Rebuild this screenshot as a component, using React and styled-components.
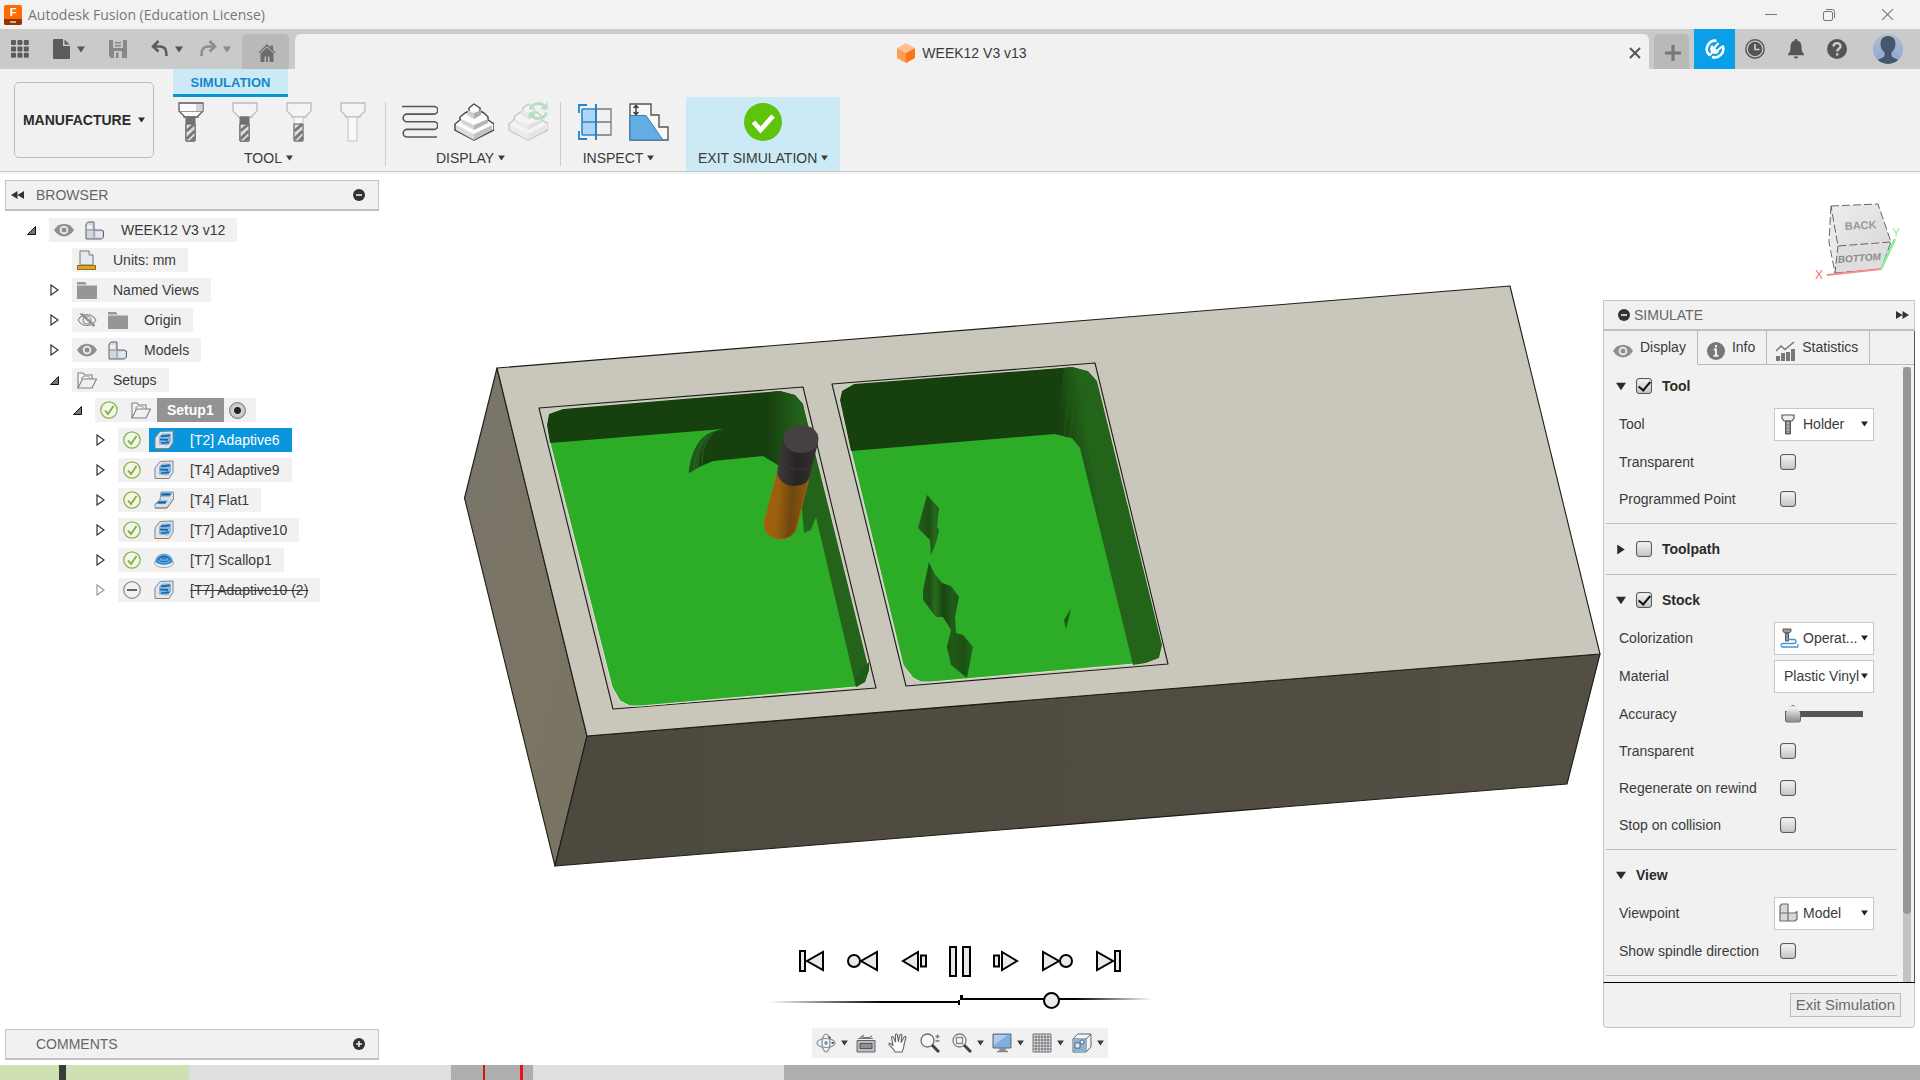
import React, { useState } from "react";
import styled, { createGlobalStyle } from "styled-components";

const Caret = ({ size = 8, color = "#3c3c3c" }) => (
    <svg width={size} height={size - 1} viewBox="0 0 8 7" aria-hidden="true">
        <path d="M0 0.5h8L4 6.5z" fill={color} />
    </svg>
);

/* ---------- icons ---------- */

const AppLogo = () => (
    <svg width="18" height="20" viewBox="0 0 18 20">
        <rect width="18" height="20" rx="2" fill="#ff6b00" />
        <path d="M0 14h18v4a2 2 0 0 1-2 2H2a2 2 0 0 1-2-2z" fill="#8c3600" />
        <text x="9" y="11" fontSize="11" fontWeight="700" fill="#fff" textAnchor="middle">
            F
        </text>
        <path d="M6 17h6" stroke="#e9c9b0" strokeWidth="1.6" />
    </svg>
);

const GridIcon = () => (
    <svg width="18" height="18" viewBox="0 0 18 18" fill="#5c5c5c">
        {[0, 6.4, 12.8].map((y) =>
            [0, 6.4, 12.8].map((x) => <rect key={x + "-" + y} x={x} y={y} width="5" height="5" rx="1" />)
        )}
    </svg>
);

const FileIcon = () => (
    <svg width="18" height="20" viewBox="0 0 18 20" fill="#5c5c5c">
        <path d="M1 0h9v7h7v12a1 1 0 0 1-1 1H1a1 1 0 0 1-1-1V1a1 1 0 0 1 1-1z" />
        <path d="M11.5 0.500l5 5h-5z" />
    </svg>
);

const SaveIcon = () => (
    <svg width="18" height="18" viewBox="0 0 18 18">
        <path d="M0 0h18v18H2l-2-2z" fill="#888" />
        <path d="M4 0h10v8H4zM5 11h8v7H5z" fill="#c9c9c9" />
        <path d="M6 2h6v1.500H6zM6 5h6v1.500H6zM7 12.500h2.500V18H7z" fill="#888" />
    </svg>
);

const UndoIcon = ({ color = "#5c5c5c", flip }) => (
    <svg width="18" height="18" viewBox="0 0 18 18" fill="none" stroke={color} strokeWidth="2.600">
        <g transform={flip ? "translate(18 0) scale(-1 1)" : undefined}>
            <path d="M7.500 1L2 6.500l5.500 5" />
            <path d="M2 6.500h7c4.500 0 6.800 3 6.500 9.500" />
        </g>
    </svg>
);

const HomeIcon = () => (
    <svg width="18" height="18" viewBox="0 0 18 18" fill="#6c6c6c">
        <path d="M9 0l3.500 3.400V1.500H15v4.400L18 9h-1.500L9 2.300 1.500 9H0z" />
        <path d="M9 3.500L15.500 9.300V18h-4v-5.500h-1.700V18H8v-5.500H6.500V18h-4V9.300z" />
    </svg>
);

const CubeLogo = () => (
    <svg width="18" height="20" viewBox="0 0 18 20">
        <path d="M9 0l9 5-9 5-9-5z" fill="#ffc194" />
        <path d="M0 5l9 5v10l-9-5z" fill="#ff9d55" />
        <path d="M18 5l-9 5v10l9-5z" fill="#ff7414" />
    </svg>
);

const CrossIcon = ({ size = 12, color = "#555", width = 2 }) => (
    <svg width={size} height={size} viewBox="0 0 12 12" stroke={color} strokeWidth={width}>
        <path d="M1 1l10 10M11 1L1 11" />
    </svg>
);

const PlusIcon = () => (
    <svg width="16" height="16" viewBox="0 0 16 16" stroke="#777" strokeWidth="3.200">
        <path d="M8 0v16M0 8h16" />
    </svg>
);

const ExtensionIcon = () => (
    <svg width="20" height="20" viewBox="0 0 20 20" fill="none" stroke="#fff">
        <path d="M4.500 16.300A8.500 8.500 0 0 1 11.500 1.700M17.500 6.500A8.500 8.500 0 0 1 7 18" strokeWidth="2.600" />
        <path d="M7 6.500l6.500 6.500c-2 2-4.500 2-6.300.5S5 8.500 7 6.500z" fill="#fff" strokeWidth="1" />
        <path d="M9.500 8.500L13.500 4M12.500 11.500L17 7.500M7 13.500l-2.500 3" strokeWidth="2" />
    </svg>
);

const ClockIcon = () => (
    <svg width="20" height="20" viewBox="0 0 20 20">
        <circle cx="10" cy="10" r="9.200" fill="none" stroke="#555" strokeWidth="1.400" />
        <circle cx="10" cy="10" r="7.200" fill="#555" />
        <path d="M10 5v5.500h4.500" stroke="#d2d2d2" strokeWidth="1.600" fill="none" />
    </svg>
);

const BellIcon = () => (
    <svg width="20" height="20" viewBox="0 0 20 20" fill="#555">
        <path d="M10 0c.9 0 1.400.6 1.400 1.400C14.500 2.200 15.500 5 15.500 8c0 4 .8 5.500 2.500 7v1.200H2V15c1.700-1.500 2.500-3 2.500-7 0-3 1-5.800 4.100-6.600C8.600.6 9.100 0 10 0zM7.800 17.500h4.400c-.3 1.400-1 2-2.200 2s-1.900-.6-2.200-2z" />
    </svg>
);

const HelpIcon = () => (
    <svg width="20" height="20" viewBox="0 0 20 20">
        <circle cx="10" cy="10" r="10" fill="#555" />
        <path d="M6.500 7.500c0-4.500 7-4.500 7-.3 0 2.400-3.300 2.500-3.300 5.300M10.200 14.200v2.400" fill="none" stroke="#d2d2d2" strokeWidth="2.300" />
    </svg>
);

const Avatar = () => (
    <svg width="30" height="30" viewBox="0 0 30 30">
        <defs>
            <linearGradient id="avatarSky" x1="0" y1="0" x2="0" y2="1">
                <stop offset="0" stopColor="#b3bfd2" />
                <stop offset="1" stopColor="#8ba4cf" />
            </linearGradient>
            <clipPath id="avatarRound">
                <circle cx="15" cy="15" r="15" />
            </clipPath>
        </defs>
        <g clipPath="url(#avatarRound)">
            <rect width="30" height="30" fill="url(#avatarSky)" />
            <path d="M15 2c4.500 0 7.500 3 7.500 7.500 0 4-1.500 7-4 8.700v3.300c0 2 4 2.500 6.500 4.500V30H5v-4c2.500-2 6.500-2.500 6.500-4.500v-3.300c-2.500-1.700-4-4.700-4-8.700C7.500 5 10.500 2 15 2z" fill="#46566d" />
        </g>
    </svg>
);

const MinimizeIcon = () => (
    <svg width="12" height="12" viewBox="0 0 12 12" stroke="#777">
        <path d="M0 5.500h12" />
    </svg>
);

const RestoreIcon = () => (
    <svg width="12" height="12" viewBox="0 0 12 12" stroke="#777" fill="none">
        <rect x="0.500" y="2.500" width="9" height="9" rx="1.500" />
        <path d="M3 .5h6.500a2 2 0 0 1 2 2V9" />
    </svg>
);

const MillIcon = ({ holder, shaft, flutes }) => (
    <svg width="26" height="40" viewBox="0 0 26 40">
        <path
            d="M1 1h24v8l-5 5v1H6v-1L1 9z"
            fill={holder ? "#fafafa" : "#f4f4f4"}
            stroke={holder ? "#5a5a5a" : "#bcbcbc"}
            strokeWidth="1.300"
        />
        {holder && <path d="M18 2h6.500v7H18z" fill="#d3d3d3" />}
        {holder && <path d="M2 9.500h22" stroke="#999" />}
        <path d="M8 15h9v24H8z" fill="#f8f8f8" stroke={shaft ? "#666" : "#c2c2c2"} />
        {shaft && <path d="M8 15h9v8H8z" fill="#727272" />}
        {flutes && (
            <g>
                <path d="M8 22h9v17H8z" fill="#dedede" stroke="#5a5a5a" />
                <path d="M8.500 29l8-7M8.500 37l8-8M13 39l4-4" stroke="#777" strokeWidth="2.800" />
            </g>
        )}
    </svg>
);

const ToolpathIcon = () => (
    <svg width="36" height="34" viewBox="0 0 36 34" fill="none" stroke="#555" strokeWidth="1.600">
        <path d="M0 1.500h32a3.800 3.800 0 0 1 0 7.600H5a3.800 3.800 0 0 0 0 7.700h27a3.800 3.800 0 0 1 0 7.600H5a3.800 3.800 0 0 0 0 7.600h30" />
    </svg>
);

const StockIcon = ({ faded, refresh }) => (
    <svg width="40" height="40" viewBox="0 0 40 40">
        <g opacity={faded ? 0.25 : 1} strokeLinejoin="round">
            <path d="M1 22l5-4v-3l5-4 4-2V6l5-4 6 4v3l4 2 4 4v3l6 4v6L20 38 1 28z" fill="#fdfdfd" stroke="#4a4a4a" strokeWidth="1.500" />
            <path d="M2 23l18 9v6L2 28z" fill="#dcdcdc" />
            <path d="M38 23l-18 9v6l18-10z" fill="#c2c2c2" />
            <path d="M7 17l13 6v5L7 21z" fill="#d5d5d5" />
            <path d="M34 17l-14 6v5l14-7z" fill="#b4b4b4" />
            <path d="M14 8l6 3v6l-7-4z" fill="#cfcfcf" />
            <path d="M27 8l-7 3v6l7-4z" fill="#adadad" />
        </g>
        {refresh && (
            <g fill="none" stroke="#b5dfc5" strokeWidth="3">
                <path d="M22 7.500c2-7 12-8 15-2M38.500 10.500c-2 7-12 8-15 2" />
                <path d="M39.500 0v7.500H32zM21 18v-7.500h7.500z" fill="#b5dfc5" stroke="none" />
            </g>
        )}
    </svg>
);

const CompareIcon = () => (
    <svg width="36" height="38" viewBox="0 0 36 38" fill="none">
        <path d="M5 6h14v26H5z" fill="#aed5f3" />
        <path d="M5 6h14M5 19h14M5 32h14M5 6v26" stroke="#2d86c9" strokeWidth="1.600" />
        <path d="M20 6h14v26H20M20 19h14" stroke="#777" strokeWidth="1.300" />
        <path d="M19 1v36" stroke="#1a76bd" strokeWidth="1.800" />
        <path d="M10 2H2v8M10 36H2v-8" stroke="#2186cf" strokeWidth="1.800" />
    </svg>
);

const StockCompareIcon = () => (
    <svg width="40" height="38" viewBox="0 0 40 38">
        <path d="M1 1h21v11h8v12h9v13H1z" fill="#f8f8f8" stroke="#555" strokeWidth="1.400" />
        <path d="M1 12.500h16L34 37H1z" fill="#63ade4" stroke="#3b7cae" />
        <path d="M7 3v8M4.500 5L7 2.500 9.500 5M4.500 9L7 11.500 9.500 9" fill="none" stroke="#333" strokeWidth="1.400" />
    </svg>
);

const DoneIcon = () => (
    <svg width="38" height="38" viewBox="0 0 38 38">
        <circle cx="19" cy="19" r="19" fill="#5ec30b" />
        <path d="M9.500 19l7 8L29 13" fill="none" stroke="#fff" strokeWidth="4.800" />
    </svg>
);

const DoubleArrow = ({ right }) => (
    <svg width="13" height="8" viewBox="0 0 13 8" fill="#333">
        <path d={right ? "M0 0l6.500 4L0 8zM6.500 0L13 4l-6.500 4z" : "M13 0L6.500 4 13 8zM6.500 0L0 4l6.500 4z"} />
    </svg>
);

const RoundSign = ({ plus }) => (
    <svg width="12" height="12" viewBox="0 0 12 12">
        <circle cx="6" cy="6" r="6" fill="#333" />
        <path d={plus ? "M6 3v6M3 6h6" : "M3 6h6"} stroke="#eee" strokeWidth="1.600" />
    </svg>
);

const EyeIcon = ({ off }) => (
    <svg width="20" height="14" viewBox="0 0 20 14">
        {off ? (
            <g fill="none" stroke="#8f8f8f" strokeWidth="1.200">
                <path d="M1 7c4.500-7.300 13.500-7.300 18 0-4.500 7.300-13.500 7.300-18 0z" />
                <circle cx="10" cy="7" r="4" />
                <path d="M3 0.500l14 13M5 0.500l13 12" />
            </g>
        ) : (
            <g>
                <path d="M0 7c5-8.500 15-8.500 20 0-5 8.500-15 8.500-20 0z" fill="#8f8f8f" />
                <circle cx="10" cy="7" r="4.300" fill="#eee" />
                <circle cx="10" cy="7" r="2.500" fill="#8f8f8f" />
            </g>
        )}
    </svg>
);

const ComponentIcon = () => (
    <svg width="19" height="19" viewBox="0 0 19 19" stroke="#5b6470" strokeLinejoin="round">
        <path d="M1 3l2-2h6v8h7l2.500 1v6l-2 2H1z" fill="#d2d7dd" />
        <path d="M1 9h8v9" fill="none" stroke="#8a929c" />
        <path d="M2 4h5v4H2z" fill="#f0f2f4" stroke="none" />
        <path d="M11 11h6v5h-6z" fill="#e4e8ec" stroke="none" />
    </svg>
);

const UnitsIcon = () => (
    <svg width="19" height="20" viewBox="0 0 19 20">
        <path d="M3 1h9l4 4v10H3z" fill="#e6eaf2" stroke="#777" />
        <path d="M12 1v4h4" fill="#fff" stroke="#777" />
        <rect x="0.500" y="15.500" width="18" height="4" fill="#dfa22b" stroke="#9a6c12" />
    </svg>
);

const FolderIcon = () => (
    <svg width="20" height="17" viewBox="0 0 20 17" fill="#969696">
        <path d="M0 0h8l2 2.500H0zM0 3.500h20V17H0z" />
    </svg>
);

const OpenFolderIcon = () => (
    <svg width="20" height="17" viewBox="0 0 20 17" fill="none" stroke="#7d8084" strokeWidth="1.100">
        <path d="M1 16V1h5l1.500 2H15v4" fill="#f6f6f6" />
        <path d="M1 16L5.500 7H19.500L15 16z" fill="#eef0f2" />
        <path d="M4 7c2-4 7-4 10 0" stroke="#a8acb0" />
    </svg>
);

const CheckRound = () => (
    <svg width="18" height="18" viewBox="0 0 18 18" fill="none">
        <circle cx="9" cy="9" r="8.200" fill="#f0f7e2" stroke="#8db255" strokeWidth="1.300" />
        <path d="M5 9.500l3 3.500 5.500-8" stroke="#84a94c" strokeWidth="1.800" />
    </svg>
);

const MinusRound = () => (
    <svg width="18" height="18" viewBox="0 0 18 18" fill="none">
        <circle cx="9" cy="9" r="8.300" stroke="#8a8a8a" strokeWidth="1.200" />
        <path d="M4 9h10" stroke="#666" strokeWidth="2" />
    </svg>
);

const AdaptiveIcon = () => (
    <svg width="20" height="20" viewBox="0 0 20 20">
        <path d="M1 18.500V8l5-6.500 13-.5v11.500l-4 6z" fill="#e3e5e8" stroke="#7d868f" />
        <path d="M5 14.500V7l3-3.500h9v8.500l-3 3.500z" fill="#83b7e3" />
        <path d="M7 6c3 1 6-1 9-.500M6 9.500l8 .3M7 12.800c3 .8 5-.8 8-.3" fill="none" stroke="#1763a0" strokeWidth="1.700" />
        <path d="M1 18.500h14" stroke="#a77b58" />
    </svg>
);

const FlatIcon = () => (
    <svg width="20" height="18" viewBox="0 0 20 18">
        <path d="M7 1h12.500v7L13 17H1v-4l5-4z" fill="#dcdfe3" stroke="#8a929b" />
        <path d="M7.500 1.500H18.500l-3 4H6zM5 9.500h9l-3 3.500H1.500z" fill="#5aa3dd" />
        <path d="M8 3.500h8.500M4 11.500h8" stroke="#0e5490" strokeWidth="1.300" />
        <path d="M1 17h12l6.500-9" fill="none" stroke="#a77b58" />
    </svg>
);

const ScallopIcon = () => (
    <svg width="20" height="15" viewBox="0 0 20 15">
        <path d="M0 9h20c0 7.500-20 7.500-20 0z" fill="#e9eef3" stroke="#8b98a5" strokeWidth="0.800" />
        <path d="M1 8.500C2-2 18-2 19 8.500c-1 4-17 4-18 0z" fill="#64a8de" />
        <g fill="none" stroke="#1763a0" strokeWidth="0.900">
            <ellipse cx="10" cy="7.500" rx="7" ry="3.600" />
            <ellipse cx="10" cy="6" rx="5" ry="2.600" />
            <ellipse cx="10" cy="4.500" rx="2.800" ry="1.500" />
        </g>
    </svg>
);

const InfoIcon = () => (
    <svg width="18" height="18" viewBox="0 0 18 18">
        <circle cx="9" cy="9" r="9" fill="#777" />
        <path d="M9 3v2.600M6.800 7.500H9v6M6.500 13.800h5" stroke="#f0f0f0" strokeWidth="2" fill="none" />
    </svg>
);

const StatsIcon = () => (
    <svg width="19" height="20" viewBox="0 0 19 20" fill="#777">
        <path d="M0 15h4v5H0zM5 12h4v8H5zM10 11h4v9h-4zM15 8h4v12h-4z" />
        <path d="M0 10l5-5 4 3.500L18 1" fill="none" stroke="#777" strokeWidth="1.400" />
    </svg>
);

const HolderIcon = () => (
    <svg width="18" height="21" viewBox="0 0 18 21">
        <path d="M3 1h12v3l-2 3H5L3 4z" fill="#eee" stroke="#555" strokeWidth="1.200" />
        <path d="M6.500 7h5v13h-5z" fill="#888" stroke="#555" />
        <path d="M9 8v11" stroke="#ddd" strokeDasharray="2 1.500" />
    </svg>
);

const OperationIcon = () => (
    <svg width="20" height="20" viewBox="0 0 20 20" fill="none">
        <path d="M4 1h8v2.500L10 5H6L4 3.500zM6.500 5h3v8h-3z" fill="#999" stroke="#555" />
        <path d="M9 11.500h6a2 2 0 0 1 0 4H3a2 2 0 0 0 0 3.500h16M19 16v3" stroke="#3d97d6" strokeWidth="1.300" />
    </svg>
);

const ModelIcon = () => (
    <svg width="19" height="19" viewBox="0 0 19 19" fill="#d8d8d8" stroke="#6a6a6a" strokeWidth="1.200" strokeLinejoin="round">
        <path d="M1 3l2-2h6v9H1zM1 10h8v8H1zM9 10h7l2-1.500V16l-2 2H9z" />
    </svg>
);

const TwistIcon = ({ open, dim }) =>
    open ? (
        <svg width="9" height="9" viewBox="0 0 9 9">
            <path d="M8.500 0.500v8h-8z" fill="#777" stroke="#111" />
        </svg>
    ) : (
        <svg width="9" height="12" viewBox="0 0 9 12">
            <path d="M1 1v10l7-5z" fill="#fff" stroke={dim ? "#999" : "#333"} strokeWidth="1.200" />
        </svg>
    );

/* playback glyphs share one stroke */
const Glyph = ({ width, height = 22, children }) => (
    <svg width={width} height={height} viewBox={`0 0 ${width} ${height}`} fill="#e9e9e9" stroke="#000" strokeWidth="2">
        {children}
    </svg>
);

const playback = [
    ["Go to start", <Glyph width={26}><path d="M1 1h5v20H1zM24 2v18L8 11z" /></Glyph>],
    ["Previous operation", <Glyph width={32}><circle cx="7" cy="11" r="6" /><path d="M30 2v18L14 11z" /></Glyph>],
    ["Step back", <Glyph width={26}><path d="M17 2v18L2 11zM20 5.500h5v11h-5z" /></Glyph>],
    ["Pause", <Glyph width={22} height={31}><path d="M1 1h6v29H1zM14 1h7v29h-7z" /></Glyph>],
    ["Step forward", <Glyph width={26}><path d="M9 2v18l15-9zM1 5.500h5v11H1z" /></Glyph>],
    ["Next operation", <Glyph width={32}><path d="M2 2v18l16-9z" /><circle cx="25" cy="11" r="6" /></Glyph>],
    ["Go to end", <Glyph width={26}><path d="M2 2v18l16-9zM20 1h5v20h-5z" /></Glyph>],
];

const navTools = [
    ["Orbit", true, (
        <svg width="20" height="20" viewBox="0 0 20 20" fill="none" stroke="#8a8f95" strokeWidth="1.200">
            <ellipse cx="10" cy="10" rx="9" ry="4.500" />
            <ellipse cx="10" cy="10" rx="4" ry="9" />
            <path d="M10 8v4M8 10h4" stroke="#3d7db5" />
            <path d="M12 3l3 1-1 2zM15 9l3 0-1 2.500z" fill="#444" stroke="none" />
        </svg>
    )],
    ["Look at", false, (
        <svg width="20" height="20" viewBox="0 0 20 20">
            <path d="M1 7.500h18V19H1z" fill="#b9bdc4" stroke="#666" />
            <path d="M4 10.500h12v5H4z" fill="#8c939d" stroke="#555" />
            <path d="M2 5.500h15M4 5l3-2.500v2h7l2-1.500" fill="none" stroke="#777" strokeWidth="1.100" />
        </svg>
    )],
    ["Pan", false, (
        <svg width="20" height="20" viewBox="0 0 20 20" fill="#fdfdfd" stroke="#666" strokeWidth="1.100" strokeLinejoin="round">
            <path d="M7 19c-1-3-4-5-6.300-8 .8-1.200 2.300-.5 4.300 1.500L3.500 4.500c.5-1.200 1.700-1 2 0L7.500 9V1.800c.5-1 1.700-1 2 0L10.300 8.500 12 1.800c.6-.9 1.700-.7 1.900.2L13 9.500l3.300-5.800c.9-.6 1.700 0 1.600.8L16 12c0 3-1 5-2 7z" />
        </svg>
    )],
    ["Zoom", false, (
        <svg width="20" height="20" viewBox="0 0 20 20" fill="none" stroke="#6a6f74" strokeWidth="1.300">
            <circle cx="7.500" cy="7.500" r="6.500" fill="#f6f8f8" />
            <path d="M12 12l7 7" stroke="#444" strokeWidth="3" />
            <path d="M15.500 3.500h4M17.500 1.500v4M15.500 8h4" stroke="#777" />
        </svg>
    )],
    ["Zoom window", true, (
        <svg width="20" height="20" viewBox="0 0 20 20" fill="none" stroke="#7a7f84" strokeWidth="1.300">
            <circle cx="7.500" cy="7.500" r="6.500" fill="#f6f8f8" />
            <path d="M4.500 4.500h6v6h-6z" stroke="#888" />
            <path d="M12 12l7 7" stroke="#444" strokeWidth="3" />
        </svg>
    )],
    ["Display settings", true, (
        <svg width="20" height="20" viewBox="0 0 20 20">
            <path d="M1 1h18v14H1z" fill="#7eaee0" stroke="#666" />
            <path d="M2 2h14L2 12z" fill="#a9ccf0" />
            <path d="M8 15h5v2.500H8zM5 18.500h11" fill="#999" stroke="#888" strokeWidth="1.500" />
        </svg>
    )],
    ["Grid and snaps", true, (
        <svg width="20" height="20" viewBox="0 0 20 20" fill="none" stroke="#62666c" strokeWidth="0.900">
            <path d="M1 1h18v18H1z" fill="#e8ebef" />
            <path d="M4 1v18M7 1v18M10 1v18M13 1v18M16 1v18M1 4h18M1 7h18M1 10h18M1 13h18M1 16h18" />
        </svg>
    )],
    ["Viewports", true, (
        <svg width="20" height="20" viewBox="0 0 20 20" fill="#f2f5f8" stroke="#5d6670">
            <path d="M5.500 1H19v13l-5 5H1V6z" />
            <path d="M1 6h13v13M14 6l5-5" fill="none" />
            <path d="M1.500 6.500h12v12h-12z" fill="#86b3de" stroke="none" />
            <path d="M3 10h5v5H3z" fill="#e4ecf4" />
            <circle cx="10" cy="9" r="2" />
        </svg>
    )],
];

/* ---------- 3d scene ---------- */

const Scene = () => (
    <SceneSvg viewBox="0 172 1920 893" role="img" aria-label="Stock simulation">
        <defs>
            <linearGradient id="front" x1="0" y1="0" x2="1" y2="0">
                <stop offset="0" stopColor="#4c493f" />
                <stop offset="0.500" stopColor="#504c42" />
                <stop offset="1" stopColor="#534f45" />
            </linearGradient>
            <linearGradient id="side" x1="0" y1="0" x2="1" y2="1">
                <stop offset="0" stopColor="#79756a" />
                <stop offset="1" stopColor="#7a7461" />
            </linearGradient>
            <linearGradient id="wallA" gradientUnits="userSpaceOnUse" x1="768" y1="0" x2="802" y2="0">
                <stop offset="0" stopColor="#17400f" />
                <stop offset="1" stopColor="#23641a" />
            </linearGradient>
            <linearGradient id="wallB" gradientUnits="userSpaceOnUse" x1="1058" y1="410" x2="1084" y2="406">
                <stop offset="0" stopColor="#17400f" />
                <stop offset="1" stopColor="#23641a" />
            </linearGradient>
            <linearGradient id="shade" gradientUnits="userSpaceOnUse" x1="918" y1="0" x2="975" y2="0">
                <stop offset="0" stopColor="#216018" />
                <stop offset="0.200" stopColor="#1c4f15" />
                <stop offset="0.300" stopColor="#2a6a20" />
                <stop offset="0.450" stopColor="#18450f" />
                <stop offset="0.600" stopColor="#205b18" />
                <stop offset="0.800" stopColor="#1b5013" />
                <stop offset="1" stopColor="#236a1b" />
            </linearGradient>
            <linearGradient id="shank" x1="0" y1="0" x2="1" y2="0">
                <stop offset="0" stopColor="#3f3b3a" />
                <stop offset="0.500" stopColor="#262324" />
                <stop offset="1" stopColor="#383435" />
            </linearGradient>
            <linearGradient id="brass" x1="0" y1="0" x2="1" y2="0.100">
                <stop offset="0" stopColor="#a85c0b" />
                <stop offset="0.350" stopColor="#9a600f" />
                <stop offset="0.650" stopColor="#6e470f" />
                <stop offset="1" stopColor="#92570c" />
            </linearGradient>
        </defs>

        <g stroke="#1d1c18" strokeWidth="1.100" strokeLinejoin="round">
            <path d="M497 368L464.500 498 555 866 587 736z" fill="url(#side)" />
            <path d="M587 736L1600 654 1567 784 555 866z" fill="url(#front)" />
            <path d="M497 368L1510 286 1600 654 587 736z" fill="#c9c7bc" />
            <path d="M539 408L803 387 876 688 613 709zM832 384L1095 363 1168 664 906 686z" fill="#cbc9be" />
        </g>

        {/* left pocket */}
        <path d="M549 414L563 409 780 391 795 395 803 404 869 670 865 682 856 687 641 706 630 706 620 701 612 687 550 443 547 425z" fill="#2cac27" stroke="#e4e2d8" strokeWidth="1" />
        <path d="M549 414L563 409 780 391 795 395 803 404 812 460 778 459 763 456 713 461 699 467 689 473C691 452 699 434 723 429L550 443 547 425z" fill="#17400f" />
        <path d="M780 391L795 395 803 404 869 670 865 682 856 687 816 517 811 530 804 533 802 510 786 470 763 456 770 392z" fill="url(#wallA)" />
        <path d="M716 431C704 440 699 452 699 467L689 473C691 452 699 434 716 431z" fill="#20571a" />
        <path d="M712 434C703 445 702 455 702 465M706 437C697 448 695 458 694 470" stroke="#2d6426" fill="none" />
        <path d="M856 687L854 678 869 662 869 670 865 682z" fill="#1f5a16" />

        {/* right pocket */}
        <path d="M842 391L854 384 1073 367 1088 371 1097 381 1162 645 1159 658 1146 663 931 682 921 682 913 678 903 665 851 451 840 400z" fill="#2cac27" stroke="#e4e2d8" strokeWidth="1" />
        <path d="M842 391L854 384 1073 367 1082 448 1072 438 1055 434 851 451 840 400z" fill="#17400f" />
        <path d="M1064 368L1073 367 1088 371 1097 381 1162 645 1159 658 1146 663 1133 665 1080 448 1072 438 1055 434z" fill="url(#wallB)" />
        <path d="M1072 370L1064 436M1078 371L1070 438M1085 373L1076 442" stroke="#265e1d" strokeWidth="0.800" fill="none" />
        <g fill="url(#shade)">
            <path d="M927 495L939 508 937 527 939 530 936 543 931 555 930 540 918 528z" />
            <path d="M929 562L934 573 942 583 951 586 959 597 955 617 956 633 963 635 973 647 967 678 951 665 947 647 951 630 943 617 936 617 923 600 923 590z" />
        </g>
        <path d="M1071 608L1069 617 1066 629 1064 620z" fill="#1c5a14" />

        {/* cutter */}
        <path d="M777 473L764 523C764 533 771 539 780 539 788 539 794 535 796 530L809 478z" fill="url(#brass)" stroke="#a86514" strokeWidth="0.800" />
        <path d="M783 439L777 473C779 481 786 486 793 486 801 486 808 483 809 478L818 443z" fill="url(#shank)" />
        <path d="M781 461c6 9 20 11 31 5" fill="none" stroke="#3c3839" />
        <ellipse cx="801" cy="439" rx="17.500" ry="14" fill="#454142" />
    </SceneSvg>
);

const ViewCube = () => (
    <CubeSvg width="90" height="90" viewBox="0 0 90 90" role="img" aria-label="View cube">
        <defs>
            <linearGradient id="cubeTop" x1="0" y1="0" x2="1" y2="1">
                <stop offset="0" stopColor="#eeeeee" />
                <stop offset="1" stopColor="#d9d9d9" />
            </linearGradient>
        </defs>
        <path d="M17 7L64 5 77 43 68 70 21 74 16 41z" fill="#e9e9e9" />
        <path d="M17 7L64 5 77 43 24 48z" fill="url(#cubeTop)" />
        <path d="M24 48L77 43 68 70 21 74z" fill="#dedede" />
        <path d="M17 7L64 5 77 43 24 47zM17 7L15 43 21 74 24 47M21 74L67 70 77 43" fill="none" stroke="#666" strokeWidth="1" strokeDasharray="8 3" />
        <path d="M13 76L67 70" stroke="#f58a8f" strokeWidth="2" />
        <path d="M67 70L81 40" stroke="#86ee8c" strokeWidth="2.500" />
        <text x="31" y="31" fontSize="11" fontWeight="700" fill="#999" transform="rotate(-3 31 31)">BACK</text>
        <text x="24" y="64" fontSize="10" fontStyle="italic" fontWeight="700" fill="#8c8c8c" transform="rotate(-4 24 64)">BOTTOM</text>
        <text x="1" y="80" fontSize="12" fill="#f07379">X</text>
        <text x="78" y="38" fontSize="12" fill="#92ef97">Y</text>
    </CubeSvg>
);

/* ---------- data ---------- */

const tree = [
    { level: 0, open: true, icons: [<EyeIcon />, <ComponentIcon />], label: "WEEK12 V3 v12" },
    { level: 1, leaf: true, icons: [<UnitsIcon />], label: "Units: mm" },
    { level: 1, icons: [<FolderIcon />], label: "Named Views" },
    { level: 1, icons: [<EyeIcon off />, <FolderIcon />], label: "Origin" },
    { level: 1, icons: [<EyeIcon />, <ComponentIcon />], label: "Models" },
    { level: 1, open: true, icons: [<OpenFolderIcon />], label: "Setups" },
    { level: 2, open: true, icons: [<CheckRound />, <OpenFolderIcon />], label: "Setup1", setup: true },
    { level: 3, icons: [<CheckRound />, <AdaptiveIcon />], label: "[T2] Adaptive6" },
    { level: 3, icons: [<CheckRound />, <AdaptiveIcon />], label: "[T4] Adaptive9" },
    { level: 3, icons: [<CheckRound />, <FlatIcon />], label: "[T4] Flat1" },
    { level: 3, icons: [<CheckRound />, <AdaptiveIcon />], label: "[T7] Adaptive10" },
    { level: 3, icons: [<CheckRound />, <ScallopIcon />], label: "[T7] Scallop1" },
    { level: 3, icons: [<MinusRound />, <AdaptiveIcon />], label: "[T7] Adaptive10 (2)", off: true },
];

const ribbon = [
    {
        name: "TOOL",
        icons: [
            ["Tool with holder", <MillIcon holder shaft flutes />],
            ["Shaft and flutes", <MillIcon shaft flutes />],
            ["Flutes", <MillIcon flutes />],
            ["Hidden tool", <MillIcon />],
        ],
    },
    {
        name: "DISPLAY",
        icons: [
            ["Toolpath", <ToolpathIcon />],
            ["Stock", <StockIcon />],
            ["Refresh stock", <StockIcon faded refresh />],
        ],
    },
    {
        name: "INSPECT",
        icons: [
            ["Section", <CompareIcon />],
            ["Compare", <StockCompareIcon />],
        ],
    },
];

const timeline = [
    { width: 189, color: "#cfe0b2" },
    { width: 262, color: "#dfdfdf" },
    { width: 82, color: "#aeaeae" },
    { width: 251, color: "#dfdfdf" },
    { width: 1136, color: "#aeaeae" },
];

const marks = [
    { at: 59, width: 7, color: "#3a3a3a" },
    { at: 483, width: 2, color: "#d01818" },
    { at: 520, width: 3, color: "#ee1111" },
];

/* ---------- panel parts ---------- */

const CheckRow = ({ id, label }) => (
    <Row>
        <RowLabel htmlFor={id}>{label}</RowLabel>
        <Control>
            <CheckBox id={id} type="checkbox" />
        </Control>
    </Row>
);

const SelectRow = ({ id, label, icon, value }) => (
    <Row $tall>
        <RowLabel htmlFor={id}>{label}</RowLabel>
        <SelectBox>
            {icon && <SelectIcon>{icon}</SelectIcon>}
            <Select id={id} $icon={!!icon}>
                <option>{value}</option>
            </Select>
            <SelectCaret>
                <Caret size={7} color="#222" />
            </SelectCaret>
        </SelectBox>
    </Row>
);

const SectionHead = ({ label, open = true, check, checked }) => (
    <Head>
        <FoldButton aria-label={"Fold " + label} $open={open}>
            <Caret size={10} color="#2b2b2b" />
        </FoldButton>
        {check && <CheckBox id={"show-" + label} type="checkbox" defaultChecked={checked} />}
        <HeadLabel as={check ? "label" : "span"} htmlFor={check ? "show-" + label : undefined}>
            {label}
        </HeadLabel>
    </Head>
);

function App() {
    const [selected, setSelected] = useState("[T2] Adaptive6");

    const renderTree = () => {
        return tree.map((item) => (
            <TreeItem key={item.label} $level={item.level}>
                <Twist>{!item.leaf && <TwistIcon open={item.open} dim={item.off} />}</Twist>
                <TreeBody>
                    {item.icons.length > 1 && <IconCell>{item.icons[0]}</IconCell>}
                    <Entry
                        $selected={selected === item.label}
                        $off={item.off}
                        $setup={item.setup}
                        onClick={() => setSelected(item.label)}
                    >
                        <IconCell>{item.icons[item.icons.length - 1]}</IconCell>
                        {item.setup ? <SetupName>{item.label}</SetupName> : <EntryName>{item.label}</EntryName>}
                    </Entry>
                    {item.setup && <SetupRadio type="radio" name="setup" aria-label="Active setup" defaultChecked />}
                </TreeBody>
            </TreeItem>
        ));
    };

    return (
        <>
            <GlobalStyle />
            <Page>
                <TitleBar>
                    <AppLogo />
                    <AppName>Autodesk Fusion (Education License)</AppName>
                    <WindowButtons>
                        <IconButton aria-label="Minimize"><MinimizeIcon /></IconButton>
                        <IconButton aria-label="Restore"><RestoreIcon /></IconButton>
                        <IconButton aria-label="Close"><CrossIcon size={13} color="#777" width={1} /></IconButton>
                    </WindowButtons>
                </TitleBar>

                <TabBar>
                    <QuickTools>
                        <IconButton aria-label="Data panel"><GridIcon /></IconButton>
                        <IconButton aria-label="File"><FileIcon /><Caret color="#555" /></IconButton>
                        <IconButton aria-label="Save"><SaveIcon /></IconButton>
                        <UndoGroup>
                            <IconButton aria-label="Undo"><UndoIcon /><Caret color="#555" /></IconButton>
                            <IconButton aria-label="Redo"><UndoIcon flip color="#8d8d8d" /><Caret color="#8a8a8a" /></IconButton>
                        </UndoGroup>
                    </QuickTools>
                    <SmallTab $width={47} aria-label="Home"><HomeIcon /></SmallTab>
                    <DocumentTab>
                        <DocumentName><CubeLogo />WEEK12 V3 v13</DocumentName>
                        <IconButton aria-label="Close tab"><CrossIcon /></IconButton>
                    </DocumentTab>
                    <SmallTab $width={35} aria-label="New tab"><PlusIcon /></SmallTab>
                    <ExtensionButton aria-label="Extensions"><ExtensionIcon /></ExtensionButton>
                    <AccountTools>
                        <IconButton aria-label="Job status"><ClockIcon /></IconButton>
                        <IconButton aria-label="Notifications"><BellIcon /></IconButton>
                        <IconButton aria-label="Help"><HelpIcon /></IconButton>
                        <IconButton aria-label="Account"><Avatar /></IconButton>
                    </AccountTools>
                </TabBar>

                <Ribbon>
                    <Workspace>MANUFACTURE<Caret size={7} color="#2b2b2b" /></Workspace>
                    <div>
                        <RibbonTab>SIMULATION</RibbonTab>
                        <Groups>
                            {ribbon.map((group) => (
                                <Group key={group.name}>
                                    <GroupIcons>
                                        {group.icons.map(([label, icon]) => (
                                            <ToolButton key={label} aria-label={label}>{icon}</ToolButton>
                                        ))}
                                    </GroupIcons>
                                    <GroupLabel>{group.name}<Caret size={7} /></GroupLabel>
                                </Group>
                            ))}
                            <ExitGroup>
                                <GroupIcons>
                                    <ToolButton aria-label="Finish"><DoneIcon /></ToolButton>
                                </GroupIcons>
                                <ExitLabel>EXIT SIMULATION<Caret size={7} /></ExitLabel>
                            </ExitGroup>
                        </Groups>
                    </div>
                </Ribbon>

                <Viewport>
                    <Scene />
                    <Overlay>
                        <LeftColumn>
                            <PanelBar>
                                <BarIcon><DoubleArrow /></BarIcon>
                                <BarTitle>BROWSER</BarTitle>
                                <IconButton aria-label="Collapse browser"><RoundSign /></IconButton>
                            </PanelBar>
                            <Tree>{renderTree()}</Tree>
                            <Spacer />
                            <PanelBar>
                                <BarIcon />
                                <BarTitle>COMMENTS</BarTitle>
                                <IconButton aria-label="Open comments"><RoundSign plus /></IconButton>
                            </PanelBar>
                        </LeftColumn>

                        <CenterColumn>
                            <Playback>
                                {playback.map(([label, icon]) => (
                                    <IconButton key={label} aria-label={label}>{icon}</IconButton>
                                ))}
                            </Playback>
                            <Speed>
                                <svg width="384" height="12" viewBox="0 0 384 12" aria-hidden="true">
                                    <defs>
                                        <linearGradient id="fadeIn"><stop offset="0" stopColor="#000" stopOpacity="0" /><stop offset="0.600" /></linearGradient>
                                        <linearGradient id="fadeOut"><stop offset="0.600" /><stop offset="1" stopColor="#000" stopOpacity="0" /></linearGradient>
                                    </defs>
                                    <path d="M0 7h190v-1h2v5h-2V9H0z" fill="url(#fadeIn)" />
                                    <path d="M192 1h3v3h189v2H192z" fill="url(#fadeOut)" />
                                </svg>
                                <SpeedInput type="range" aria-label="Playback speed" min="0" max="1000" defaultValue="748" />
                            </Speed>
                            <NavBar>
                                {navTools.map(([label, menu, icon]) => (
                                    <NavButton key={label} aria-label={label} $menu={menu}>
                                        {icon}
                                        {menu && <Caret size={7} />}
                                    </NavButton>
                                ))}
                            </NavBar>
                        </CenterColumn>

                        <RightColumn>
                            <ViewCube />
                            <Simulate>
                                <SimHead>
                                    <IconButton aria-label="Collapse panel"><RoundSign /></IconButton>
                                    <SimTitle>SIMULATE</SimTitle>
                                    <DoubleArrow right />
                                </SimHead>
                                <SimBody>
                                    <SimTabs>
                                        <SimTab $active><EyeIcon /><span>Display</span></SimTab>
                                        <SimTab><InfoIcon /><span>Info</span></SimTab>
                                        <SimTab><StatsIcon /><span>Statistics</span></SimTab>
                                        <TabRest />
                                    </SimTabs>
                                    <Scroller>
                                        <Sections>
                                            <Section>
                                                <SectionHead label="Tool" check checked />
                                                <SelectRow id="tool" label="Tool" icon={<HolderIcon />} value="Holder" />
                                                <CheckRow id="tool-transparent" label="Transparent" />
                                                <CheckRow id="point" label="Programmed Point" />
                                            </Section>
                                            <Section>
                                                <SectionHead label="Toolpath" open={false} check />
                                            </Section>
                                            <Section>
                                                <SectionHead label="Stock" check checked />
                                                <SelectRow id="colorization" label="Colorization" icon={<OperationIcon />} value="Operat..." />
                                                <SelectRow id="material" label="Material" value="Plastic Vinyl" />
                                                <Row>
                                                    <RowLabel htmlFor="accuracy">Accuracy</RowLabel>
                                                    <Accuracy id="accuracy" type="range" defaultValue="0" />
                                                </Row>
                                                <CheckRow id="stock-transparent" label="Transparent" />
                                                <CheckRow id="regenerate" label="Regenerate on rewind" />
                                                <CheckRow id="collision" label="Stop on collision" />
                                            </Section>
                                            <Section>
                                                <SectionHead label="View" />
                                                <SelectRow id="viewpoint" label="Viewpoint" icon={<ModelIcon />} value="Model" />
                                                <CheckRow id="spindle" label="Show spindle direction" />
                                            </Section>
                                        </Sections>
                                        <ScrollTrack><ScrollThumb /></ScrollTrack>
                                    </Scroller>
                                </SimBody>
                                <SimFoot>
                                    <ExitButton>Exit Simulation</ExitButton>
                                </SimFoot>
                            </Simulate>
                        </RightColumn>
                    </Overlay>
                </Viewport>

                <Timeline>
                    {timeline.map((part, i) => (
                        <TimePart key={i} $size={part.width} $color={part.color} />
                    ))}
                    {marks.map((mark) => (
                        <TimeMark key={mark.at} $at={mark.at} $size={mark.width} $color={mark.color} />
                    ))}
                </Timeline>
            </Page>
        </>
    );
}

export default App;

const GlobalStyle = createGlobalStyle`
    * {
        box-sizing: border-box;
    }
    body {
        margin: 0;
        background: #fff;
        color: #3a3a3a;
        font: 14px/20px "Liberation Sans", Arial, sans-serif;
    }
    button, input, select {
        font: inherit;
        color: inherit;
    }
    svg {
        display: block;
        flex: none;
    }
`;

const Page = styled.div`
    display: flex;
    flex-direction: column;
    min-height: 100vh;
`;

const IconButton = styled.button`
    display: flex;
    align-items: center;
    gap: 6px;
    padding: 0;
    border: 0;
    background: none;
`;

const TitleBar = styled.header`
    display: flex;
    align-items: center;
    height: 29px;
    padding: 0 26px 0 4px;
    background: #f2f2f2;
`;
const AppName = styled.span`
    flex: 1;
    margin-left: 6px;
    color: #777;
    font-family: "Open Sans", "Noto Sans", sans-serif;
`;
const WindowButtons = styled.div`
    display: flex;
    gap: 46px;
`;

const TabBar = styled.nav`
    display: flex;
    align-items: flex-end;
    height: 40px;
    background: #cacaca;
`;
const QuickTools = styled.div`
    display: flex;
    align-items: center;
    gap: 24px;
    align-self: stretch;
    padding: 0 11px;
`;
const UndoGroup = styled.div`
    display: flex;
    gap: 16px;
`;
const SmallTab = styled.button`
    display: flex;
    align-items: center;
    justify-content: center;
    width: ${(p) => p.$width}px;
    height: 35px;
    padding: 3px 0 0 3px;
    border: 0;
    border-radius: 5px 5px 0 0;
    background: #b9b9b9;
`;
const DocumentTab = styled.div`
    display: flex;
    flex: 1;
    align-items: center;
    height: 35px;
    margin: 0 5px 0 6px;
    padding: 2px 8px 0 0;
    border-radius: 6px 6px 0 0;
    background: #f1f1f1;
`;
const DocumentName = styled.div`
    display: flex;
    flex: 1;
    align-items: center;
    justify-content: center;
    gap: 7px;
`;
const ExtensionButton = styled.button`
    display: grid;
    place-items: center;
    width: 41px;
    height: 40px;
    margin-left: 5px;
    padding: 0;
    border: 0;
    background: #0a9fe9;
`;
const AccountTools = styled.div`
    display: flex;
    align-items: center;
    align-self: stretch;
    gap: 21px;
    padding: 0 17px 0 10px;

    & > :last-child {
        margin-left: 5px;
    }
`;

const Ribbon = styled.section`
    display: flex;
    height: 103px;
    padding-left: 14px;
    border-bottom: 1px solid #c6c6c6;
    background: #f1f1f1;
`;
const Workspace = styled.button`
    display: flex;
    align-items: center;
    justify-content: center;
    gap: 7px;
    width: 140px;
    height: 76px;
    margin: 13px 19px 0 0;
    padding: 0;
    border: 1px solid #bcbcbc;
    border-radius: 5px;
    background: none;
    color: #2b2b2b;
    font-weight: 700;
`;
const RibbonTab = styled.div`
    width: 115px;
    height: 28px;
    border-bottom: 3px solid #0696d7;
    background: #cceaf6;
    color: #1787c8;
    font-size: 13px;
    font-weight: 700;
    line-height: 28px;
    text-align: center;
`;
const Groups = styled.div`
    display: flex;
`;
const Group = styled.div`
    display: flex;
    flex-direction: column;
    gap: 6px;
    position: relative;
    height: 74px;
    padding: 5px 15px 0 16px;

    &:first-child {
        padding-left: 0;
    }
    &:nth-child(-n + 2)::after {
        content: "";
        position: absolute;
        top: 5px;
        right: 0;
        width: 1px;
        height: 64px;
        background: #ccc;
    }
`;
const ExitGroup = styled(Group)`
    margin-left: 4px;
    padding: 5px 12px 0;
    background: #cceaf5;
`;
const GroupIcons = styled.div`
    display: flex;
    justify-content: center;
    gap: 18px;
    height: 40px;
`;
const ToolButton = styled.button`
    display: flex;
    align-items: center;
    justify-content: center;
    width: 36px;
    padding: 0;
    border: 0;
    background: none;
`;
const GroupLabel = styled.div`
    display: flex;
    align-items: center;
    justify-content: center;
    gap: 4px;
    padding-right: 7px;
`;
const ExitLabel = styled(GroupLabel)`
    padding-right: 0;
`;

const Viewport = styled.main`
    position: relative;
    display: flex;
    flex: 1;
    border-top: 2px solid #f3f3f3;
`;
const SceneSvg = styled.svg`
    position: absolute;
    inset: -2px 0 0;
    width: 100%;
    height: calc(100% + 2px);
`;
const Overlay = styled.div`
    position: relative;
    display: grid;
    grid-template-columns: 1fr auto 1fr;
    flex: 1;
    padding: 6px 5px 5px;
`;
const LeftColumn = styled.aside`
    display: flex;
    flex-direction: column;
    width: 374px;
`;
const CenterColumn = styled.div`
    display: flex;
    flex-direction: column;
    align-items: center;
    justify-content: flex-end;
    padding-bottom: 2px;
`;
const RightColumn = styled.aside`
    justify-self: end;
    width: 312px;
`;
const Spacer = styled.div`
    flex: 1;
`;

const PanelBar = styled.div`
    display: flex;
    align-items: center;
    height: 31px;
    padding: 0 13px 0 5px;
    border: 1px solid #c2c2c2;
    border-bottom-width: 2px;
    background: #f1f1f1;
    color: #666;
`;
const BarIcon = styled.span`
    width: 25px;
`;
const BarTitle = styled.span`
    flex: 1;
`;

const Tree = styled.ul`
    margin: 4px 0 0;
    padding: 0;
    list-style: none;
`;
const TreeItem = styled.li`
    display: flex;
    align-items: center;
    height: 30px;
    padding-left: ${(p) => 22 + p.$level * 23}px;
`;
const Twist = styled.span`
    width: 22px;
`;
const TreeBody = styled.div`
    display: flex;
    align-items: center;
    height: 24px;
    background: #f1f1f1;
`;
const IconCell = styled.span`
    display: flex;
    width: 31px;
    padding-left: 5px;
`;
const Entry = styled.button`
    display: flex;
    align-items: center;
    height: 24px;
    padding: 0 ${(p) => (p.$setup ? 3 : 12)}px 0 0;
    border: 0;
    background: ${(p) => (p.$selected ? "#0a96dc" : "transparent")};
    color: ${(p) => (p.$selected ? "#fff" : "#3a3a3a")};
    text-decoration: ${(p) => (p.$off ? "line-through" : "none")};
`;
const EntryName = styled.span`
    margin-left: 10px;
`;
const SetupName = styled.span`
    padding: 2px 10px;
    background: #939393;
    color: #fff;
    font-weight: 700;
`;
const SetupRadio = styled.input`
    appearance: none;
    width: 17px;
    height: 17px;
    margin: 0 10px 0 2px;
    border: 1px solid #777;
    border-radius: 50%;
    background: radial-gradient(circle, #222 0 3px, #d5d5d5 4px, #bbb 8px);
`;

const Playback = styled.div`
    display: flex;
    align-items: center;
    gap: 22px;
    height: 32px;
`;
const Speed = styled.div`
    position: relative;
    margin: 17px 0 22px;
`;
const SpeedInput = styled.input`
    position: absolute;
    inset: -3px 0 0;
    width: 100%;
    height: 18px;
    margin: 0;
    appearance: none;
    background: none;

    &::-webkit-slider-thumb {
        appearance: none;
        width: 17px;
        height: 17px;
        border: 2px solid #000;
        border-radius: 50%;
        background: #ececec;
    }
`;
const NavBar = styled.div`
    display: flex;
    align-items: center;
    gap: 8px;
    height: 30px;
    padding: 0 4px;
    background: #f1f1f1;
`;
const NavButton = styled(IconButton)`
    gap: 5px;
    margin-right: ${(p) => (p.$menu ? 0 : 4)}px;
`;

const CubeSvg = styled.svg`
    margin: 19px 0 11px 211px;
`;

const Simulate = styled.section`
    border: 1px solid #c4c4c4;
    border-radius: 0 0 4px 4px;
    background: #f1f1f1;
`;
const SimHead = styled.div`
    display: flex;
    align-items: center;
    gap: 4px;
    height: 30px;
    padding: 0 5px 0 14px;
    border-bottom: 2px solid #c0c0c0;
    color: #666;
`;
const SimTitle = styled.span`
    flex: 1;
`;
const SimBody = styled.div`
    margin: 0 -1px;
    border: 1px solid #555;
    border-left-color: #c4c4c4;
    border-top: 0;
    border-bottom: 1px solid #000;
`;
const SimTabs = styled.div`
    display: flex;
    height: 34px;
`;
const SimTab = styled.button`
    display: flex;
    align-items: flex-start;
    gap: 7px;
    padding: 6px 11px 0 9px;
    border: 0;
    border-right: 1px solid #bbb;
    border-bottom: 1px solid ${(p) => (p.$active ? "#f1f1f1" : "#bbb")};
    background: none;

    svg {
        align-self: center;
    }
`;
const TabRest = styled.span`
    flex: 1;
    border-bottom: 1px solid #bbb;
`;
const Scroller = styled.div`
    display: flex;
    padding: 0 3px 0 2px;
`;
const Sections = styled.div`
    flex: 1;
    margin-right: 6px;
    padding-bottom: 6px;
`;
const Section = styled.div`
    padding: 6px 0;
    border-bottom: 1px solid #bfbfbf;

    &:first-child {
        padding-top: 2px;
    }
`;
const Head = styled.div`
    display: flex;
    align-items: center;
    height: 38px;
    gap: 10px;
    padding-left: 10px;
`;
const HeadLabel = styled.label`
    color: #2b2b2b;
    font-weight: 700;
`;
const FoldButton = styled.button`
    padding: 0;
    border: 0;
    background: none;
    transform: ${(p) => (p.$open ? "none" : "rotate(-90deg)")};
`;
const Row = styled.div`
    display: flex;
    align-items: center;
    justify-content: space-between;
    height: ${(p) => (p.$tall ? 38 : 37)}px;
    padding: 0 23px 0 13px;
`;
const RowLabel = styled.label``;
const Control = styled.span`
    display: flex;
    width: 100px;
    padding-left: 6px;
`;
const CheckBox = styled.input`
    appearance: none;
    width: 16px;
    height: 16px;
    margin: 0;
    border: 1px solid #5a5a5a;
    border-radius: 3px;
    background: linear-gradient(#f4f4f4, #c6c6c6);
    box-shadow: inset 0 0 1px #777;

    &:checked::after {
        content: "";
        display: block;
        width: 5px;
        height: 10px;
        margin: 0 auto;
        border: solid #111;
        border-width: 0 2px 2px 0;
        transform: rotate(40deg);
    }
`;
const SelectBox = styled.div`
    position: relative;
    width: 100px;
`;
const Select = styled.select`
    appearance: none;
    width: 100%;
    height: 33px;
    padding: 0 0 0 ${(p) => (p.$icon ? 28 : 9)}px;
    border: 1px solid #c8c8c8;
    border-radius: 0;
    background: #fff;
`;
const SelectIcon = styled.span`
    position: absolute;
    top: 6px;
    left: 5px;
    pointer-events: none;
`;
const SelectCaret = styled.span`
    position: absolute;
    top: 13px;
    right: 6px;
    pointer-events: none;
`;
const Accuracy = styled.input`
    appearance: none;
    width: 78px;
    height: 18px;
    margin: 0 11px;
    background: linear-gradient(#555, #555) 0 6px / 100% 6px no-repeat;

    &::-webkit-slider-runnable-track {
        height: 18px;
    }
    &::-webkit-slider-thumb {
        appearance: none;
        width: 16px;
        height: 18px;
        background: linear-gradient(#fff, #888);
        border: 1px solid #666;
        border-radius: 8px 8px 3px 3px;
        clip-path: polygon(50% 0, 70% 12%, 100% 52%, 100% 100%, 0 100%, 0 52%, 30% 12%);
    }
`;
const ScrollTrack = styled.div`
    width: 8px;
    margin-top: 2px;
    background: #c3c3c3;
`;
const ScrollThumb = styled.div`
    height: 89%;
    border-radius: 4px;
    background: #979797;
`;
const SimFoot = styled.div`
    display: flex;
    justify-content: flex-end;
    padding: 10px 13px 10px;
`;
const ExitButton = styled.button`
    height: 24px;
    padding: 0 5px;
    border: 1px solid #bdbdbd;
    background: #ececec;
    color: #6a6a6a;
    font-size: 15px;
`;

const Timeline = styled.footer`
    position: relative;
    display: flex;
    height: 15px;
`;
const TimePart = styled.div`
    flex: ${(p) => p.$size} 1 0;
    background: ${(p) => p.$color};
`;
const TimeMark = styled.span`
    position: absolute;
    top: 0;
    bottom: 0;
    left: ${(p) => (p.$at / 1920) * 100}%;
    width: ${(p) => p.$size}px;
    background: ${(p) => p.$color};
`;
